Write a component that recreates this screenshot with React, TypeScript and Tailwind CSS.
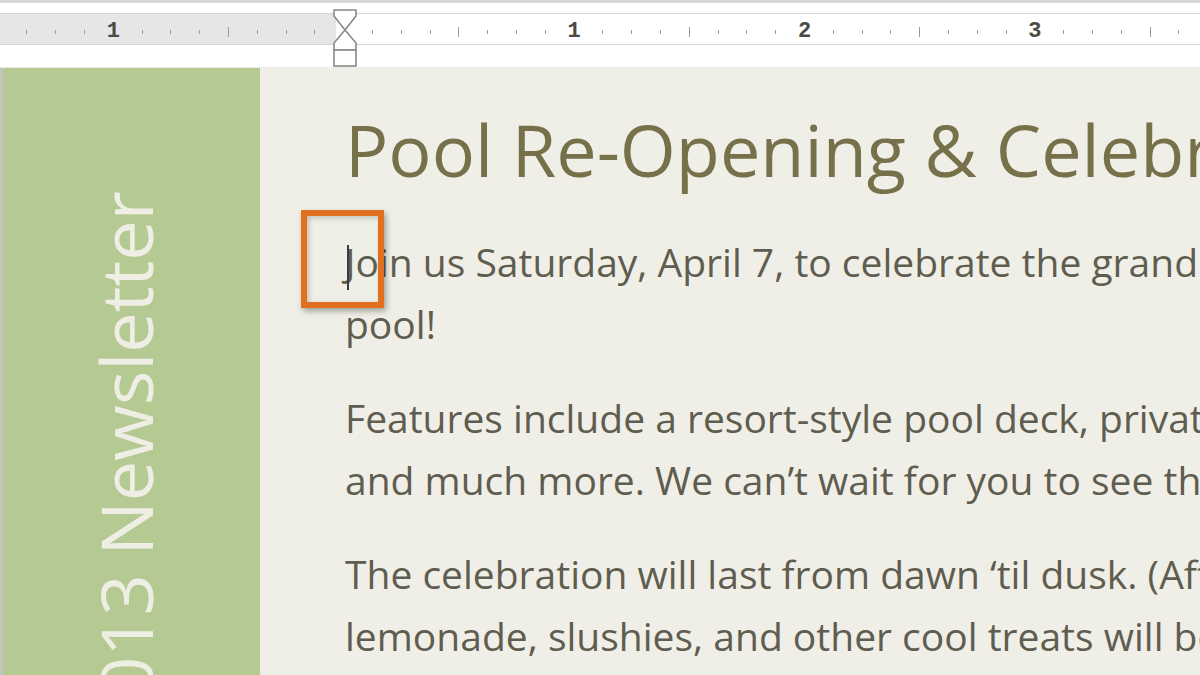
import React from 'react';

// ruler marks, one every 1/8 inch (28.8px), first one centred at x=27
type Mark = 'dot' | 'long' | 'zero' | string;

const buildMarks = (): Mark[] => {
  const marks: Mark[] = [];
  for (let i = 0; i < 42; i++) {
    const step = i - 11; // 0 sits at the left margin
    if (step === 0) marks.push('zero');
    else if (step % 8 === 0) marks.push(String(Math.abs(step / 8)));
    else if (step % 4 === 0) marks.push('long');
    else marks.push('dot');
  }
  return marks;
};

const IndentMarker = () => (
  <svg width="26" height="60" viewBox="0 0 26 60" className="absolute left-[332px] top-[8px]">
    <path d="M2 2 H24 V8 L13 22 L2 8 Z" fill="#ffffff" stroke="#8a8a82" strokeWidth="1.6" strokeLinejoin="round" />
    <path d="M13 22 L24 35 V42 H2 V35 Z" fill="#ffffff" stroke="#8a8a82" strokeWidth="1.6" strokeLinejoin="round" />
    <rect x="2" y="42" width="22" height="16" fill="#ffffff" stroke="#8a8a82" strokeWidth="1.6" />
  </svg>
);

const Ruler = () => {
  const marks = buildMarks();
  return (
    <div className="relative h-[67px] bg-white">
      <div className="h-[3px] bg-[#d6d6d6]" />
      <div className="mt-[10px] h-[32px] border-y border-[#d4d4d4] bg-[linear-gradient(to_right,#e6e6e6_336px,#ffffff_336px)] flex items-center pt-[6px] pl-[12.6px]">
        {marks.map((m, i) => (
          <div key={i} className="w-[28.8px] shrink-0 flex items-center justify-center">
            {m === 'dot' && <span className="block w-px h-[4px] bg-[#9c9c9c]" />}
            {m === 'long' && <span className="block w-px h-[10px] bg-[#9c9c9c]" />}
            {m !== 'dot' && m !== 'long' && m !== 'zero' && (
              <span className="text-[22px] font-bold leading-none text-[#4a4a44] [font-family:'Liberation_Mono',monospace]">{m}</span>
            )}
          </div>
        ))}
      </div>
      <IndentMarker />
    </div>
  );
};

export default function App() {
  return (
    <div className="w-[1200px] h-[675px] overflow-hidden bg-white [font-family:'Open_Sans',sans-serif]">
      <Ruler />
      <div className="flex h-[608px] border-t border-dotted border-[#d9d8cc]">
        <div className="w-[3px] bg-[#c4c4c0]" />
        <div className="w-[257px] shrink-0 overflow-hidden bg-[#b5ca93] pl-[86px] pt-[123px]">
          <span className="block [writing-mode:vertical-rl] rotate-180 whitespace-nowrap text-[72px] leading-none text-[#efeee4]">
            2013 Newsletter
          </span>
        </div>
        <div className="relative flex-1 overflow-hidden bg-[#f0efe7] pl-[85px] pt-[45px] whitespace-nowrap">
          <h1 className="text-[72px] leading-none text-[#77714b]">Pool Re-Opening &amp; Celebration</h1>
          <div className="mt-[46px] text-[39px] leading-[62px] text-[#5f5d4f]">
            <p>Join us Saturday, April 7, to celebrate the grand re-opening of our<br />pool!</p>
            <p className="mt-[32px]">Features include a resort-style pool deck, private cabanas, a water slide,<br />and much more. We can’t wait for you to see the new facilities!</p>
            <p className="mt-[32px]">The celebration will last from dawn ‘til dusk. (After all, it’s a pool party!)<br />lemonade, slushies, and other cool treats will be served all day.</p>
          </div>

          {/* text cursor + highlight callout */}
          <span className="absolute left-[87px] top-[177px] w-[2px] h-[45px] bg-[#3c3c3c]" />
          <div className="absolute left-[41px] top-[142px] w-[83px] h-[98px] border-[6px] border-[#e0701f] shadow-[2px_3px_6px_rgba(0,0,0,0.35),inset_2px_2px_5px_rgba(0,0,0,0.2)]" />
        </div>
      </div>
    </div>
  );
}
